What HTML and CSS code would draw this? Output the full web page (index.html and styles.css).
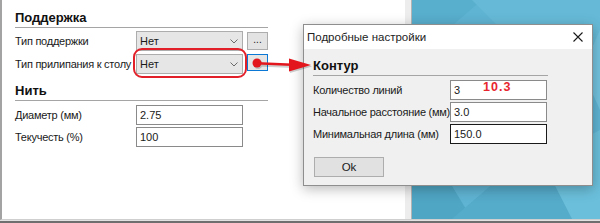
FILE: index.html
```html
<!DOCTYPE html>
<html lang="ru">
<head>
<meta charset="utf-8">
<title>Настройки</title>
<link rel="stylesheet" href="styles.css">
</head>
<body>
<div class="screen">
  <div class="main">
    <div class="win">
      <div class="panel">
        <div class="section-title">Поддержка</div>
        <div class="rows rows-combo">
          <div class="row">
            <span class="label">Тип поддержки</span>
            <div class="combo"><span>Нет</span><svg class="chev" width="8" height="5" viewBox="0 0 8 5"><polyline points="0.5,0.5 4,4 7.5,0.5" fill="none" stroke="#6a6a6a" stroke-width="1"/></svg></div>
            <div class="btn-small">...</div>
          </div>
          <div class="row">
            <span class="label">Тип прилипания к столу</span>
            <div class="combo"><span>Нет</span><svg class="chev" width="8" height="5" viewBox="0 0 8 5"><polyline points="0.5,0.5 4,4 7.5,0.5" fill="none" stroke="#6a6a6a" stroke-width="1"/></svg></div>
            <div class="btn-small btn-focus"></div>
          </div>
        </div>
        <div class="section-title section-gap">Нить</div>
        <div class="rows rows-input">
          <div class="row">
            <span class="label">Диаметр (мм)</span>
            <div class="field">2.75</div>
          </div>
          <div class="row">
            <span class="label">Текучесть (%)</span>
            <div class="field">100</div>
          </div>
        </div>
      </div>
      <div class="win-edge"></div>
    </div>
    <div class="desktop">
      <svg width="188" height="219" viewBox="0 0 188 219">
        <rect width="188" height="219" fill="#5fb4d3"/>
        <polygon points="0,0 70,0 0,60" fill="#58aecd"/>
        <polygon points="60,0 188,0 188,40 130,70" fill="#66bad7"/>
        <polygon points="188,30 170,70 188,110" fill="#72c2de"/>
        <polygon points="0,120 60,219 0,219" fill="#4fa5c4"/>
        <polygon points="40,219 120,150 188,219" fill="#55abca"/>
        <polygon points="130,160 160,219 188,219 188,130" fill="#6bbfdb"/>
        <polygon points="0,60 80,120 0,160" fill="#59afce"/>
      </svg>
    </div>
  </div>
  <div class="bottombar"></div>

  <div class="dialog">
    <div class="dlg-title">
      <span>Подробные настройки</span>
      <svg class="close" width="10" height="10" viewBox="0 0 10 10"><path d="M0.5 0.5 L9.5 9.5 M9.5 0.5 L0.5 9.5" stroke="#1a1a1a" stroke-width="1.1" fill="none"/></svg>
    </div>
    <div class="dlg-body">
      <div class="section-title">Контур</div>
      <div class="rows rows-input">
        <div class="row">
          <span class="label dlg-label">Количество линий</span>
          <div class="field dlg-field">3</div>
        </div>
        <div class="row">
          <span class="label dlg-label">Начальное расстояние (мм)</span>
          <div class="field dlg-field">3.0</div>
        </div>
        <div class="row">
          <span class="label dlg-label">Минимальная длина (мм)</span>
          <div class="field dlg-field field-active">150.0</div>
        </div>
      </div>
      <div class="ok-btn">Ok</div>
    </div>
  </div>

  <div class="annot-num">10.3</div>
  <div class="highlight"></div>
  <svg class="arrow" width="600" height="223" viewBox="0 0 600 223">
    <g transform="translate(1,1.5)" fill="#000" opacity="0.18">
      <circle cx="257" cy="63" r="4.5"/>
      <polygon points="257,62 292,63.5 292,66.5 257,65"/>
      <polygon points="289,58.5 311,65 289,71.5"/>
    </g>
    <g fill="#e3161d">
      <circle cx="257" cy="63" r="4.5"/>
      <polygon points="257,62 292,63.5 292,66 257,64.5"/>
      <polygon points="289,58.5 311,65 289,71.5"/>
    </g>
  </svg>
</div>
</body>
</html>
```

FILE: styles.css
```css
* { box-sizing: border-box; }
html, body { margin: 0; padding: 0; }
body {
  width: 600px;
  height: 223px;
  overflow: hidden;
  background: #ffffff;
  font-family: "Liberation Sans", Arial, sans-serif;
  font-size: 11px;
  color: #1a1a1a;
}
.screen {
  position: relative;
  width: 600px;
  height: 223px;
  display: flex;
  flex-direction: column;
}
.main {
  display: flex;
  height: 220px;
}
.win {
  display: flex;
  width: 412px;
  border-left: 2px solid #a3a3a3;
  border-bottom: 1px solid #cfcfcf;
}
.panel {
  width: 403px;
  background: #ffffff;
  padding: 10px 0 0 13px;
}
.win-edge {
  width: 7px;
  background: #ededed;
  border-right: 1px solid #b4b4b4;
}
.desktop {
  flex: 1;
  border-bottom: 1px solid #cfcfcf;
  overflow: hidden;
}
.desktop svg { display: block; }
.bottombar {
  height: 3px;
  background: #6f6f6f;
  border-top: 1px solid #e2e2e2;
}
.section-title {
  width: 253px;
  font-size: 13px;
  font-weight: bold;
  line-height: 16px;
  padding-bottom: 1px;
  border-bottom: 1px solid #a5a5a5;
  color: #111;
}
.section-gap { margin-top: 9px; }
.rows {
  display: flex;
  flex-direction: column;
}
.rows-combo { margin-top: 3px; gap: 3px; }
.rows-input { margin-top: 4px; gap: 2px; }
.row {
  display: flex;
  align-items: center;
  height: 20px;
}
.label {
  width: 121px;
  letter-spacing: -0.25px;
  white-space: nowrap;
}
.combo {
  width: 107px;
  height: 20px;
  border: 1px solid #adadad;
  background: #e6e6e6;
  display: flex;
  align-items: center;
  justify-content: space-between;
  padding: 0 4px 0 3px;
}
.chev { display: block; }
.btn-small {
  margin-left: 4px;
  width: 21px;
  height: 18px;
  border: 1px solid #adadad;
  background: #e3e3e3;
  display: flex;
  align-items: center;
  justify-content: center;
  font-size: 10px;
  line-height: 10px;
  padding-bottom: 3px;
}
.btn-focus {
  height: 17px;
  border: 1px solid #0a78d4;
  background: #e5e5e5;
  align-self: flex-start;
}
.field {
  width: 107px;
  height: 20px;
  border: 1px solid #8a8a8a;
  background: #fff;
  display: flex;
  align-items: center;
  padding-left: 3px;
}

/* dialog window on the desktop */
.dialog {
  position: absolute;
  left: 303px;
  top: 24px;
  width: 290px;
  height: 162px;
  border: 1px solid #8e8e8e;
  background: #f0f0f0;
  box-shadow: 0 3px 12px rgba(0,0,0,0.28);
  display: flex;
  flex-direction: column;
}
.dlg-title {
  height: 24px;
  background: #fff;
  display: flex;
  align-items: center;
  justify-content: space-between;
  padding: 0 9px 0 3px;
  font-size: 11.5px;
  color: #222;
}
.close { display: block; }
.dlg-body {
  flex: 1;
  padding: 9px 0 0 9px;
}
.dlg-body .section-title { width: 235px; }
.dlg-label { width: 137px; }
.dlg-field { width: 97px; }
.field-active { border-color: #1a1a1a; }
.ok-btn {
  margin-top: 13px;
  margin-left: 1px;
  width: 70px;
  height: 20px;
  border: 1px solid #adadad;
  background: #e1e1e1;
  display: flex;
  align-items: center;
  justify-content: center;
  font-size: 11.5px;
}

/* annotations */
.annot-num {
  position: absolute;
  left: 483px;
  top: 80px;
  font-size: 12.5px;
  font-weight: bold;
  letter-spacing: 1px;
  color: #e8262d;
  line-height: 14px;
}
.highlight {
  position: absolute;
  left: 133px;
  top: 48px;
  width: 114px;
  height: 30px;
  border: 2px solid #e2202a;
  border-radius: 9px;
}
.arrow {
  position: absolute;
  left: 0;
  top: 0;
  pointer-events: none;
}
```
